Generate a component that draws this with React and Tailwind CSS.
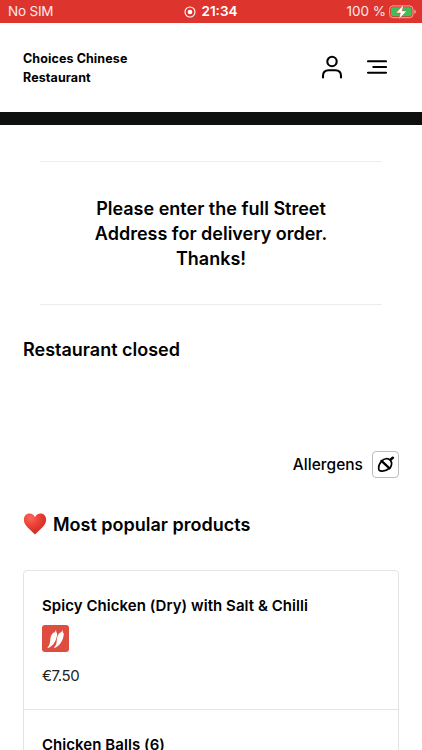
import React from 'react';

const products = [
  { name: 'Spicy Chicken (Dry) with Salt & Chilli', price: '€7.50', spicy: true },
  { name: 'Chicken Balls (6)' },
];

const RecordIcon = () => (
  <svg width="12" height="12" viewBox="0 0 12 12" fill="none">
    <circle cx="6" cy="6" r="5" stroke="#fff" strokeWidth="1.1" />
    <circle cx="6" cy="6" r="2.3" fill="#fff" />
  </svg>
);

const BatteryIcon = () => (
  <svg width="28" height="16" viewBox="0 0 28 16" fill="none">
    <rect x="0.6" y="1.9" width="23.4" height="11.8" rx="3.4" stroke="#f3a9a3" strokeWidth="1" />
    <rect x="2" y="3.3" width="20.6" height="9" rx="2" fill="#3fbf57" />
    <path d="M25.3 5.8c1 .4 1.5 1.1 1.5 2s-.5 1.6-1.5 2z" fill="#f3a9a3" />
    <path d="M14.6.8 6.9 8.9h4.5L9.9 15.2l7.8-8.2h-4.5z" fill="#fff" stroke="#dd352e" strokeWidth="0.4" strokeLinejoin="round" />
  </svg>
);

const UserIcon = () => (
  <svg width="24" height="26" viewBox="0 0 24 26" fill="none" stroke="#000" strokeWidth="2.1" strokeLinecap="round">
    <circle cx="12" cy="7.5" r="4.7" />
    <path d="M3 23.5V22c0-3.6 2.2-5.7 5.7-5.7h6.6c3.5 0 5.7 2.1 5.7 5.7v1.5" />
  </svg>
);

const MenuIcon = () => (
  <svg width="20" height="16" viewBox="0 0 20 16" fill="none" stroke="#000" strokeWidth="2.1" strokeLinecap="round">
    <path d="M1 2.3h18M6.3 8h12.7M1 13.7h18" />
  </svg>
);

const NutIcon = () => (
  <svg width="18" height="18" viewBox="0 0 18 18" fill="none" stroke="#000" strokeLinecap="round" strokeLinejoin="round">
    <path d="M4.500 5.300C2.500 7.300 1.600 9.600 1.700 12c0 1.200.1 2 .6 2.400.5.500 1.500.7 2.700.7 2.700.1 5.200-.8 7.100-2.700" strokeWidth="1.700" />
    <path d="M4.900 4.900c2.200-2.500 6-3 8.300-.8 2.200 2.200 1.700 6-.6 8.200" strokeWidth="1.700" />
    <path d="M4.500 4.900 12.500 12.300" strokeWidth="2.300" />
    <path d="M13.800 3.500 15.800 1.800" strokeWidth="2.600" />
  </svg>
);

const HeartIcon = () => (
  <svg width="24" height="22" viewBox="0 0 24 22">
    <defs>
      <radialGradient id="heart" cx="0.3" cy="0.2" r="0.85">
        <stop offset="0" stopColor="#fb6a58" />
        <stop offset="0.4" stopColor="#f0443a" />
        <stop offset="1" stopColor="#c92823" />
      </radialGradient>
    </defs>
    <path d="M12 4.2C10.9 2 8.9.6 6.600.6 3.100.6.900 3.300.9 6.900c0 5.800 6.600 9.600 11.100 14.500 4.500-4.900 11.100-8.700 11.100-14.500 0-3.600-2.200-6.300-5.700-6.300-2.300 0-4.300 1.400-5.400 3.600z" fill="url(#heart)" />
  </svg>
);

const ChilliIcon = () => (
  <svg width="27" height="27" viewBox="0 0 27 27" fill="#fff">
    <path d="M13.8 5.2c.6.3.6 1 .3 1.900 1.200.8 1.200 2.200.9 3.700-.9 5-3.500 9.900-8.800 12.200-.7.100-.8-.4-.4-.8 2.700-2.600 2-5.900 2.800-9.600.6-3 2-5.200 4.500-5.700 0-.6.200-1 .7-1.700z" />
    <path d="M20.300 5.200c.6.300.6 1 .3 1.900 1.200.8 1.300 2.200 1 3.700-.9 5-3.600 9.900-8.900 12.200-.7.100-.8-.4-.4-.8 2.800-2.600 2.100-5.900 2.900-9.600.6-3 1.900-5.200 4.400-5.700 0-.6.200-1 .7-1.700z" />
  </svg>
);

const StatusBar = () => (
  <div className="grid h-[23px] grid-cols-3 items-center bg-[#dd352e] pl-2 pr-[5px] pt-px text-[13.5px] leading-none text-[#fde9e7]">
    <span className="tracking-[-0.2px]">No SIM</span>
    <div className="flex items-center justify-center gap-[5px] pr-[3px] font-semibold text-white">
      <RecordIcon />
      <span>21:34</span>
    </div>
    <div className="flex items-center justify-end gap-[3px]">
      <span>100 %</span>
      <BatteryIcon />
    </div>
  </div>
);

const Header = () => (
  <header className="flex h-[89px] items-center justify-between pl-[23px] pr-[35px]">
    <h1 className="w-[120px] text-[12.5px] font-bold leading-[19px] tracking-[0.1px]">Choices Chinese Restaurant</h1>
    <div className="flex items-center gap-[23px] pb-[2px]">
      <button aria-label="Account"><UserIcon /></button>
      <button aria-label="Menu"><MenuIcon /></button>
    </div>
  </header>
);

const ProductCard = ({ product }) => (
  <li className="h-[139px] border-b border-[#e4e4e4] px-[18px] pt-6">
    <h3 className="text-[15px] font-semibold leading-[22px] tracking-[0.05px]">{product.name}</h3>
    {product.spicy && (
      <div className="mt-2 h-[27px] w-[27px] rounded-[3px] bg-[#df4c40]">
        <ChilliIcon />
      </div>
    )}
    {product.price && (
      <p className="mt-[13px] text-[15px] leading-[22px] tracking-[-0.4px] text-[#222]">{product.price}</p>
    )}
  </li>
);

const App = () => {
  return (
    <div className="h-[750px] w-[422px] overflow-hidden bg-white font-['Inter',sans-serif] text-black">
      <StatusBar />
      <Header />
      <div className="h-[13px] bg-[#0e100f]" />

      <main className="px-[23px]">
        <div className="mx-[17px] mt-9 h-36 border-y border-[#ededed] px-10 pt-[34px]">
          <p className="whitespace-nowrap text-center text-[18px] font-semibold leading-[25px]">
            Please enter the full Street
            <br />
            Address for delivery order.
            <br />
            Thanks!
          </p>
        </div>

        <h2 className="mt-8 text-[18px] font-semibold leading-[25px]">Restaurant closed</h2>

        <div className="mt-[89px] flex h-[27px] items-center justify-end gap-[9px]">
          <span className="text-[15.5px] font-medium leading-[25px] tracking-[0.02px]">Allergens</span>
          <button aria-label="Show allergens" className="flex h-[27px] w-[27px] items-center justify-center rounded-[4px] border border-[#bdbdbd]">
            <NutIcon />
          </button>
        </div>

        <div className="mt-[33px] flex h-[26px] items-center gap-[6px]">
          <HeartIcon />
          <h2 className="text-[18px] font-semibold">Most popular products</h2>
        </div>

        <ul className="mt-[33px] rounded-t-[4px] border border-[#e4e4e4]">
          {products.map((product) => (
            <ProductCard key={product.name} product={product} />
          ))}
        </ul>
      </main>
    </div>
  );
};

export default App;
